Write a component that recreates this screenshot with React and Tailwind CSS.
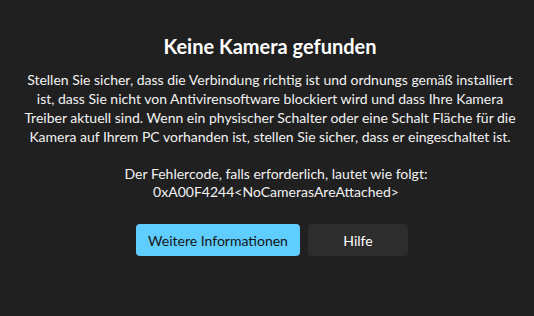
import React from "react";

const bodyLines = [
  "Stellen Sie sicher, dass die Verbindung richtig ist und ordnungs gemäß installiert",
  "ist, dass Sie nicht von Antivirensoftware blockiert wird und dass Ihre Kamera",
  "Treiber aktuell sind. Wenn ein physischer Schalter oder eine Schalt Fläche für die",
  "Kamera auf Ihrem PC vorhanden ist, stellen Sie sicher, dass er eingeschaltet ist.",
];

const App = () => {
  return (
    <div
      className="w-[534px] h-[316px] bg-[#202020] text-[#f2f2f2] flex flex-col items-center pt-[32px] pl-[6px]"
      style={{ fontFamily: 'Lato, "Noto Sans", sans-serif' }}
    >
      <h1 className="text-[20px] leading-[28px] font-bold text-white">
        Keine Kamera gefunden
      </h1>
      <p className="mt-[10px] text-[14px] leading-[19px] text-center">
        {bodyLines.map((line, i) => (
          <span key={i} className="block whitespace-nowrap">
            {line}
          </span>
        ))}
      </p>
      <p className="mt-[19px] ml-[12px] text-[14px] leading-[18px] text-center">
        <span className="block">Der Fehlercode, falls erforderlich, lautet wie folgt:</span>
        <span className="block">0xA00F4244&lt;NoCamerasAreAttached&gt;</span>
      </p>
      <div className="mt-[23px] ml-[4px] flex gap-2">
        <button className="w-[164px] h-[32px] rounded-[4px] bg-[#60cdff] text-[#141414] text-[14px]">
          Weitere Informationen
        </button>
        <button className="w-[100px] h-[32px] rounded-[4px] bg-[#2d2d2d] text-white text-[14px]">
          Hilfe
        </button>
      </div>
    </div>
  );
};

export default App;
